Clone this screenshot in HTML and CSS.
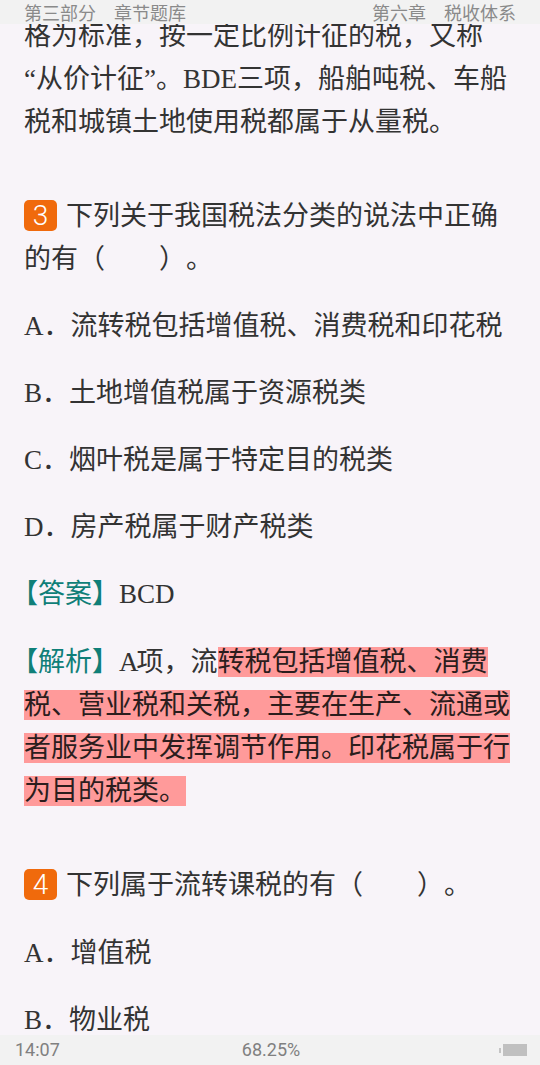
FILE: index.html
```html
<!DOCTYPE html>
<html lang="zh-CN">
<head>
<meta charset="utf-8">
<title>第六章 税收体系</title>
<link rel="stylesheet" href="styles.css">
</head>
<body>
<div class="page">
  <header class="top-bar">
    <span>第三部分　章节题库</span>
    <span>第六章　税收体系</span>
  </header>
  <main class="content">
    <p class="para">格为标准，按一定比例计征的税，又称<br>“从价计征”。BDE三项，船舶吨税、车船税和城镇土地使用税都属于从量税。</p>
    <p class="para question"><span class="num">3</span><span class="q-text">下列关于我国税法分类的说法中正确的有（　　）。</span></p>
    <p class="para">A．流转税包括增值税、消费税和印花税</p>
    <p class="para">B．土地增值税属于资源税类</p>
    <p class="para">C．烟叶税是属于特定目的税类</p>
    <p class="para">D．房产税属于财产税类</p>
    <p class="para"><span class="tag">【答案】</span>BCD</p>
    <p class="para analysis"><span class="tag">【解析】</span><span class="tight">A</span>项，流<span class="mark">转税包括增值税、消费税、营业税和关税，主要在生产、流通或者服务业中发挥调节作用。印花税属于行为目的税类。</span></p>
    <p class="para question q4"><span class="num">4</span><span class="q-text">下列属于流转课税的有（　　）。</span></p>
    <p class="para">A．增值税</p>
    <p class="para">B．物业税</p>
  </main>
  <footer class="bottom-bar">
    <span class="time">14:07</span>
    <span class="percent">68.25%</span>
    <span class="battery"><i class="tip"></i><i class="cell"></i></span>
  </footer>
</div>
</body>
</html>
```
FILE: styles.css
```css
* { box-sizing: border-box; }
html, body { margin: 0; padding: 0; height: 100%; }
.page {
  width: 540px;
  height: 1065px;
  display: flex;
  flex-direction: column;
  overflow: hidden;
  background: #f8f4f9;
}
.top-bar {
  position: relative;
  z-index: 1;
  height: 24px;
  flex: none;
  display: flex;
  justify-content: space-between;
  padding: 0 24px;
  background: #f2f2f2;
  color: #8a8a8a;
  font: 18px/24px "Noto Sans CJK SC", sans-serif;
}
.content {
  flex: 1;
  min-height: 0;
  overflow: hidden;
  margin-top: -9px;
  padding: 0 24px;
  color: #333;
  font: 27px/43px "Liberation Serif", "Noto Sans CJK SC", serif;
  text-spacing-trim: space-all;
}
.para { margin: 0 0 24px; }
.question { margin-top: 51px; }
.analysis { padding-top: 1px; }
.q4 { margin-bottom: 25px; }
.num {
  display: inline-block;
  width: 33px;
  height: 31px;
  margin-right: 9px;
  border-radius: 5px;
  background: #f06a0c;
  color: #fff;
  text-align: center;
  font: 300 28px/31px Roboto, sans-serif;
  vertical-align: 0;
}
.tag { color: #0f7f78; margin-left: -13px; }
.tight { letter-spacing: -2px; }
.mark { background: #ff9a9a; color: #2b1d1d; }
.bottom-bar {
  flex: none;
  height: 30px;
  position: relative;
  z-index: 1;
  display: grid;
  grid-template-columns: 1fr auto 1fr;
  align-items: center;
  padding: 0 13px 0 15px;
  background: #f2f2f2;
  color: #808080;
  font: 18px/30px Roboto, sans-serif;
}
.battery { display: flex; align-items: center; justify-content: flex-end; gap: 2px; }
.tip { width: 2px; height: 5px; background: #c4c4c4; }
.cell { width: 24px; height: 12px; background: #c0c0c0; }
```
